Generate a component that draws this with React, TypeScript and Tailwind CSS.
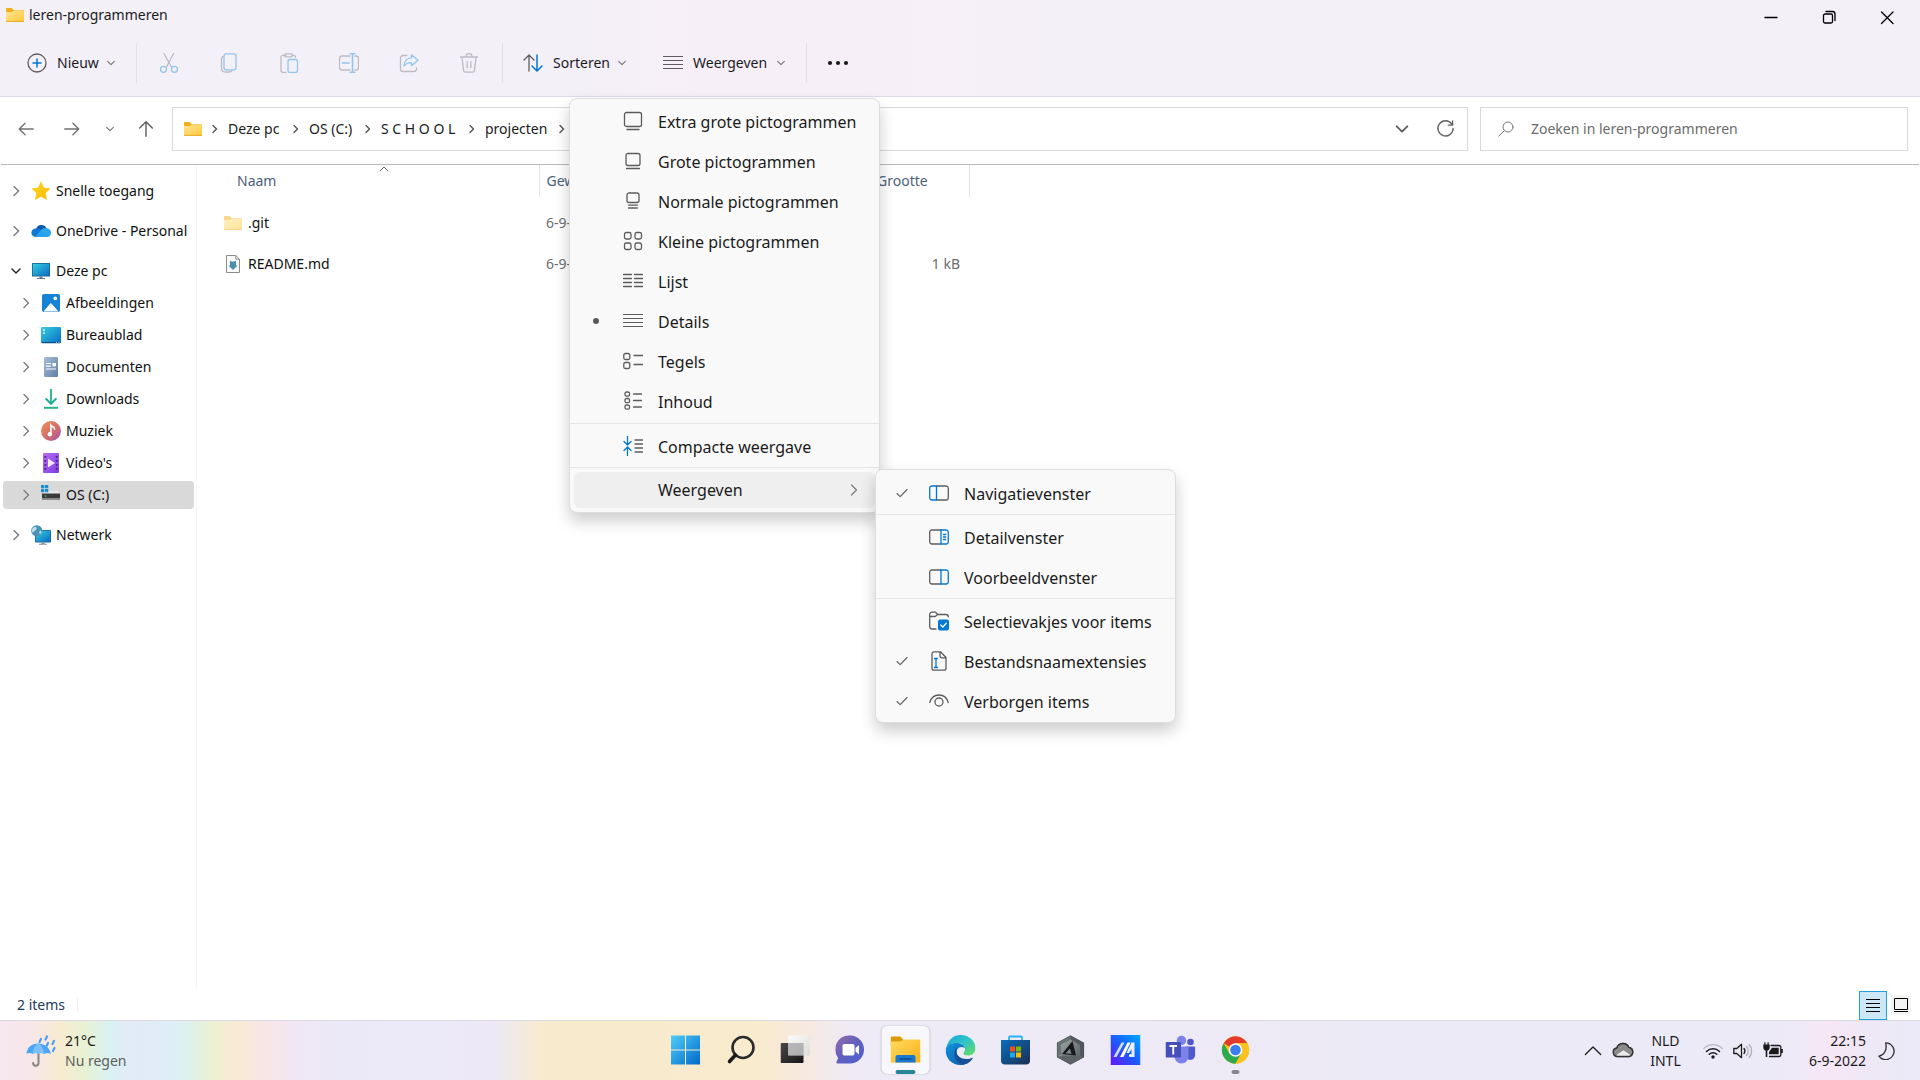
import React from "react";

type P = { children?: React.ReactNode };

const Svg = ({ s = 20, vb = "0 0 20 20", c = "", children }: P & { s?: number; vb?: string; c?: string }) => (
  <svg width={s} height={s} viewBox={vb} fill="none" stroke="#5c5c5c" strokeWidth="1.3" strokeLinecap="round" strokeLinejoin="round" className={"shrink-0 " + c} aria-hidden="true">
    {children}
  </svg>
);

const BLUE = "#0078d4";

/* ---------- chevrons ---------- */
const ChevRight = ({ c = "#808080", s = 12 }: { c?: string; s?: number }) => (
  <Svg s={s} vb="0 0 12 12"><path d="M4 1.5 8.5 6 4 10.5" stroke={c} strokeWidth="1.5" /></Svg>
);
const ChevDown = ({ c = "#777", s = 10 }: { c?: string; s?: number }) => (
  <Svg s={s} vb="0 0 12 12"><path d="M2 4 6 8 10 4" stroke={c} strokeWidth="1.4" /></Svg>
);
const Crumb = () => (
  <Svg s={10} vb="0 0 10 10"><path d="M3 1.5 6.500 5 3 8.500" stroke="#5a5a5a" strokeWidth="1.5" /></Svg>
);

/* ---------- folders and files ---------- */
const Folder = ({ pale = false }: { pale?: boolean }) => {
  const id = pale ? "fpale" : "fyel";
  return (
    <svg width="18" height="16" viewBox="0 0 18 16" className="shrink-0" aria-hidden="true">
      <defs>
        <linearGradient id={id} x1="0" y1="0" x2="1" y2="1">
          <stop offset="0" stopColor={pale ? "#fff0bf" : "#ffe596"} />
          <stop offset="1" stopColor={pale ? "#ffe49b" : "#ffc83a"} />
        </linearGradient>
      </defs>
      <path d="M0 2c0-.8.4-1 1-1h4.6L8 3.2h9c.6 0 1 .4 1 1V14H0z" fill={pale ? "#f8d98b" : "#f0af1c"} />
      <path d="M0 5h6l2-1.4h10V14a1 1 0 0 1-1 1H1a1 1 0 0 1-1-1z" fill={`url(#${id})`} />
      <path d="M0 14.4h18" stroke={pale ? "#f3d489" : "#e8a91e"} strokeWidth=".9" />
    </svg>
  );
};
const MdFile = () => (
  <svg width="18" height="20" viewBox="0 0 18 20" className="shrink-0" aria-hidden="true">
    <path d="M2.5 1.5h9.3l3.7 3.7v13.3h-13z" fill="#fafafa" stroke="#8b8b8b" />
    <path d="M11.8 1.5v3.7h3.7" fill="none" stroke="#8b8b8b" />
    <path d="M6 6.5 7.5 7.5h3L12 6.5v5h1.6L9 16l-4.6-4.5H6z" fill="#4a90ae" />
  </svg>
);

/* ---------- navigation icons ---------- */
const box = { width: 20, height: 20, viewBox: "0 0 20 20", className: "shrink-0", "aria-hidden": true } as const;
const Star = () => (
  <svg {...box}>
    <defs><linearGradient id="st" x1="0" y1="0" x2="1" y2="1"><stop stopColor="#ffdb1f" /><stop offset="1" stopColor="#fbb400" /></linearGradient></defs>
    <path d="m10 1 2.7 6 6.3.7-4.7 4.3 1.3 6.5L10 15.200 4.400 18.500 5.700 12 1 7.700 7.300 7z" fill="url(#st)" stroke="#fdbf0a" strokeWidth=".6" strokeLinejoin="round" />
  </svg>
);
const OneDrive = () => (
  <svg {...box}>
    <path d="M5 8a5.600 5.600 0 0 1 10.400-.9L11 12z" fill="#0a58b0" />
    <path d="M4.400 16A4.300 4.300 0 0 1 5 7.400c1.700-.3 3 .2 4.300 1.100L16 13l-5 3z" fill="#0f78d4" />
    <path d="M9 10.500c2-3.400 4.600-3.900 6.400-3.400 0 0 4.600.5 4.600 4.800 0 2.400-1.900 4.100-4 4.100H4.400z" fill="#2aa5ec" />
    <path d="m4.400 16 5-5.700 8.800 5z" fill="#28a0ea" />
  </svg>
);
const Pc = () => (
  <svg {...box}>
    <defs><linearGradient id="pc" x1="0" y1="0" x2="1" y2="1"><stop stopColor="#35cfe0" /><stop offset="1" stopColor="#0a6cc4" /></linearGradient></defs>
    <rect x="1" y="2" width="18" height="13.500" rx=".6" fill="#17608f" />
    <rect x="1.800" y="2.800" width="16.400" height="11.800" fill="url(#pc)" />
    <path d="M8.500 15.500h3v1.600h-3zM6 17h8v1H6z" fill="#6d7a84" />
  </svg>
);
const Pictures = () => (
  <svg {...box}>
    <rect x="1" y="1" width="18" height="18" rx="1.800" fill="#1683d4" />
    <path d="m2.500 18.600 6.300-7.700a1.300 1.300 0 0 1 2 0l6.700 7.700z" fill="#fff" />
    <circle cx="14.300" cy="5.400" r="1.800" fill="#fff" />
  </svg>
);
const Desktop = () => (
  <svg {...box}>
    <rect x="0" y="2" width="20" height="16" rx="1.200" fill="url(#pc)" />
    <path d="M2.200 4.200h1.600v1.600H2.200zM2.200 7.200h1.600v1.600H2.200z" fill="#fff" />
    <path d="M.4 17h19.200v.6a.8.8 0 0 1-.8.600H1.200a.8.800 0 0 1-.8-.6z" fill="#0b4f86" />
    <path d="M15 17.400h1M17.500 17.400h1" stroke="#fff" strokeWidth=".7" />
  </svg>
);
const Docs = () => (
  <svg {...box}>
    <defs><linearGradient id="dc" x1="0" y1="0" x2="1" y2="1"><stop stopColor="#a9bfd8" /><stop offset="1" stopColor="#5d7fa5" /></linearGradient></defs>
    <rect x="3" y="0" width="14" height="20" rx="1.200" fill="url(#dc)" />
    <path d="M5 6.500h5M5 9.200h5M5 12h10" stroke="#fff" strokeWidth="1.200" /><path d="M11.500 6h3.500v3.400h-3.500z" fill="#fff" />
  </svg>
);
const Downloads = () => (
  <svg {...box} fill="none" stroke="#1eb08c" strokeWidth="2">
    <path d="M10 0v14.500" stroke="#35bd8a" /><path d="m4.600 9.400 5.400 5.400 5.400-5.400" stroke="#1aab9b" /><path d="M3 18.800h14" stroke="#27b38e" />
  </svg>
);
const Music = () => (
  <svg {...box}>
    <defs><linearGradient id="mu" x1="0" y1="0" x2="1" y2="1"><stop stopColor="#f0914d" /><stop offset=".6" stopColor="#cf6a72" /><stop offset="1" stopColor="#9a58b8" /></linearGradient></defs>
    <circle cx="10" cy="10" r="10" fill="url(#mu)" />
    <circle cx="8.800" cy="13.300" r="2.200" fill="#fff" /><path d="M9.900 13V4.500c.8 1.200 3.600 1 3.600 3.200v1" stroke="#fff" strokeWidth="1.600" fill="none" />
  </svg>
);
const Videos = () => (
  <svg {...box}>
    <defs><linearGradient id="vi" x1="0" y1="0" x2="1" y2="1"><stop stopColor="#b76cf2" /><stop offset="1" stopColor="#7d3de0" /></linearGradient></defs>
    <rect x="2" y="0" width="16" height="20" rx="1" fill="url(#vi)" />
    <path d="M4.300 3v15M15.700 3v15" stroke="#4a2188" strokeWidth="1.800" strokeDasharray="1.800 2.200" />
    <path d="m7 5.500 7 4.500-7 4.500z" fill="#f1e9fb" />
  </svg>
);
const Drive = () => (
  <svg {...box}>
    <path d="M4 6h12.500L19 9H1z" fill="#e9e9e9" /><rect x="1" y="8.500" width="18" height="5" fill="#3b3b3b" /><path d="M1 13.500h18V15H1z" fill="#8b8b8b" />
    <circle cx="4.500" cy="11" r=".8" fill="#45e069" />
    <path d="M0 0h3.300v3.300H0zM4 0h3.300v3.300H4zM0 4h3.300v3.300H0zM4 4h3.300v3.300H4z" fill="#1a8fd8" />
  </svg>
);
const Network = () => (
  <svg {...box}>
    <rect x="4" y="5" width="16" height="12.500" rx=".8" fill="#1b6794" /><rect x="4.800" y="5.800" width="14.400" height="10.900" fill="url(#pc)" />
    <path d="M10.500 17.500h3v1.300h-3zM8 18.700h8v1H8z" fill="#84909a" />
    <circle cx="5.800" cy="5.800" r="5.600" fill="#4a93b8" /><path d="M1.500 3.500C4 1 6.500 2 5.500 4S2.500 6 2 8C.6 6.500.6 5 1.500 3.500zM8 7l2-1.500.6 2L9 9.500z" fill="#bfe0ec" />
  </svg>
);

/* ---------- toolbar ---------- */
const GR = "#bdbac2";
const LB = "#93c6ec";
const tools: [string, React.ReactNode][] = [
  ["Knippen", <><path d="M5 0.800 12.500 14M14.500.800 7.500 14" stroke={GR} /><circle cx="4.500" cy="16.300" r="3" stroke={LB} /><circle cx="15.500" cy="16.300" r="3" stroke={LB} /></>],
  ["Kopiëren", <><path d="M4 3.500c-1 .5-1.500 1-1.500 2.500v9c0 2.500 1.500 4 4 4h4c1.200 0 2-.5 2.500-1.300" stroke={GR} /><rect x="5" y=".8" width="12" height="16" rx="2.200" stroke={LB} /></>],
  ["Plakken", <><path d="M7 2.300H4A2 2 0 0 0 2 4.300v13a2 2 0 0 0 2 2h3M13 2.300h1.500a2 2 0 0 1 2 2" stroke={GR} /><rect x="5.500" y=".8" width="8" height="3" rx="1.500" stroke={GR} /><rect x="9" y="6.500" width="9.500" height="13" rx="2" stroke={LB} /></>],
  ["Naam wijzigen", <><path d="M11 3H3a2.500 2.500 0 0 0-2.500 2.500v9A2.500 2.500 0 0 0 3 17h8M16 3h1a2.500 2.500 0 0 1 2.500 2.500v9A2.500 2.500 0 0 1 17 17h-1" stroke={GR} /><path d="M13.500.800v18.400M11.200.800h4.600M11.200 19.200h4.600M3.500 10h6.500" stroke={LB} strokeWidth="1.600" /></>],
  ["Delen", <><path d="M8 2.500H4A2.500 2.500 0 0 0 1.500 5v11A2.500 2.500 0 0 0 4 18.500h11a2.500 2.500 0 0 0 2.500-2.500v-1" stroke={GR} /><path d="M12.500 1.800 19 7.200l-6.500 5.500V9.600C9 9.500 7 10.500 5 13c.3-4.500 3-8 7.500-8.200z" stroke={LB} /></>],
  ["Verwijderen", <><path d="M1.500 4h17M7 3.500a3 3 0 0 1 6 0M3 4.200l1.500 13a2 2 0 0 0 2 1.900h7a2 2 0 0 0 2-1.900l1.500-13M8.200 8.500v6M11.800 8.500v6" stroke={GR} /></>],
];
const VSep = ({ c = "" }: { c?: string }) => <div className={"h-10 w-px bg-[#e4e0e8] " + c} />;

const Lines = () => (
  <Svg><path d="M.5 3.500h19M.5 7.500h19M.5 11.500h19M.5 15.500h19" strokeWidth="1.200" /></Svg>
);

const Toolbar = () => (
  <div className="flex h-[66px] items-center text-sm text-[#1c1b1f]">
    <button className="ml-[27px] flex w-[89px] items-center">
      <Svg><circle cx="10" cy="10" r="9" /><path d="M10 6v8M6 10h8" stroke={BLUE} strokeWidth="1.500" /></Svg>
      <span className="ml-2.5 mr-auto">Nieuw</span>
      <ChevDown />
    </button>
    <VSep c="ml-5" />
    <div className="ml-0.5 flex items-center">
      {tools.map(([n, g]) => (
        <button key={n} aria-label={n} disabled className="flex w-[60px] justify-center">
          <Svg>{g}</Svg>
        </button>
      ))}
    </div>
    <VSep c="ml-[3px]" />
    <button className="ml-5 flex w-[104px] items-center">
      <Svg><path d="M6 18V2.200M1 7l5-5 5 5" /><path d="M14 2v15.800M9 13l5 5 5-5" stroke={BLUE} strokeWidth="1.500" /></Svg>
      <span className="ml-2.5 mr-auto">Sorteren</span>
      <ChevDown />
    </button>
    <button className="ml-9 flex w-[123px] items-center" aria-expanded="true">
      <Lines />
      <span className="ml-2.5 mr-auto">Weergeven</span>
      <ChevDown />
    </button>
    <VSep c="ml-5" />
    <button className="ml-5 flex" aria-label="Meer weergeven">
      <svg width="22" height="6" viewBox="0 0 22 6" aria-hidden="true"><g fill="#1b1b1b"><circle cx="3" cy="3" r="2.100" /><circle cx="11" cy="3" r="2.100" /><circle cx="19" cy="3" r="2.100" /></g></svg>
    </button>
  </div>
);

const Header = () => (
  <header className="border-b border-[#dfdbe4] bg-[linear-gradient(90deg,#f3f0f8_0%,#f3f0f8_28%,#f7eff7_38%,#f7eff7_45%,#f3f0f8_58%)]">
    <div className="flex h-[30px] items-start">
      <div className="flex items-center gap-[5px] pl-1.5 pt-[5px]">
        <Folder />
        <h1 className="text-sm leading-5 text-[#1b1b1b]">leren-programmeren</h1>
      </div>
      <div className="ml-auto mr-1 flex pt-2">
        <button aria-label="Minimaliseren" className="flex w-[58px] justify-center"><Svg s={18} vb="0 0 18 18"><path d="M3 9.500h12" stroke="#000" /></Svg></button>
        <button aria-label="Verkleinen" className="flex w-[58px] justify-center"><Svg s={18} vb="0 0 18 18"><rect x="3.500" y="6" width="9" height="9" rx="1.500" stroke="#000" /><path d="M6 3.500h6.500a2.500 2.500 0 0 1 2.500 2.500v6.500" stroke="#000" /></Svg></button>
        <button aria-label="Sluiten" className="flex w-[58px] justify-center"><Svg s={18} vb="0 0 18 18"><path d="m3.500 4 11.500 11.500M15 4 3.500 15.500" stroke="#000" /></Svg></button>
      </div>
    </div>
    <Toolbar />
  </header>
);

const AddressBar = () => (
  <div className="mx-px flex h-[68px] items-center border-b border-[#b9b9b9] pb-2 pt-1 text-sm text-[#1b1b1b]">
    <nav aria-label="Geschiedenis" className="flex w-[171px] items-center pl-4">
      <button aria-label="Terug"><Svg s={18}><path d="M18 10H2.500M9 3.500 2.500 10 9 16.500" stroke="#707070" strokeWidth="1.500" /></Svg></button>
      <button aria-label="Vooruit" className="ml-7"><Svg s={18}><path d="M2 10h15.500M11 3.500 17.500 10 11 16.500" stroke="#707070" strokeWidth="1.500" /></Svg></button>
      <button aria-label="Recent" className="ml-6"><ChevDown /></button>
      <button aria-label="Omhoog" className="ml-[22px]"><Svg s={18}><path d="M10 18V2M3 9l7-7 7 7" stroke="#606060" strokeWidth="1.600" /></Svg></button>
    </nav>
    <div className="flex h-11 flex-1 items-center border border-[#d9d9d9] bg-white pl-[11px] pr-3">
      <Folder />
      <ol className="ml-2 flex items-center">
        {[["Deze pc", "w-[81px]"], ["OS (C:)", "w-[72px]"], ["S C H O O L", "w-[104px]"], ["projecten", "w-[90px]"]].map(([t, w]) => (
          <li key={t} className={"flex items-center gap-2 whitespace-nowrap " + w}><Crumb /><button>{t}</button></li>
        ))}
        <li><Crumb /></li>
      </ol>
      <button aria-label="Vorige locaties" className="ml-auto"><ChevDown s={16} c="#606060" /></button>
      <button aria-label="Vernieuwen" className="ml-[26px]"><Svg s={19}><path d="M16.500 5.200A8 8 0 1 0 18 10M17.500 2v4.500H13" stroke="#606060" strokeWidth="1.400" /></Svg></button>
    </div>
    <label className="ml-3 mr-[11px] flex h-11 w-[428px] items-center border border-[#d9d9d9] bg-white pl-[17px]">
      <Svg s={16} vb="0 0 16 16"><circle cx="10" cy="6" r="5" stroke="#777" strokeWidth="1" /><path d="M6.300 9.700.8 15.200" stroke="#777" strokeWidth="1" /></Svg>
      <input type="search" aria-label="Zoeken in leren-programmeren" placeholder="Zoeken in leren-programmeren" className="ml-[17px] flex-1 bg-transparent outline-none placeholder:text-[#6b6b6b]" />
    </label>
  </div>
);

const Side = ({ i, t, sub, open, sel }: { i: React.ReactNode; t: string; sub?: boolean; open?: boolean; sel?: boolean }) => (
  <button className={"my-0.5 ml-[3px] mr-0.5 flex h-7 items-center whitespace-nowrap rounded-sm text-sm text-[#111] " + (sub ? "pl-[17px] " : "pl-[7px] ") + (sel ? "bg-[#d9d9d9]" : "")}>
    {open ? <ChevDown s={12} c="#222" /> : <ChevRight />}
    <span className="ml-[9px] mr-[5px]">{i}</span>
    {t}
  </button>
);

const Sidebar = () => (
  <aside className="mb-px flex w-[197px] shrink-0 flex-col gap-2 border-r border-[#f5f5f5] pt-[10px]">
    <Side i={<Star />} t="Snelle toegang" />
    <Side i={<OneDrive />} t="OneDrive - Personal" />
    <div className="flex flex-col">
      <Side i={<Pc />} t="Deze pc" open />
      <Side i={<Pictures />} t="Afbeeldingen" sub />
      <Side i={<Desktop />} t="Bureaublad" sub />
      <Side i={<Docs />} t="Documenten" sub />
      <Side i={<Downloads />} t="Downloads" sub />
      <Side i={<Music />} t="Muziek" sub />
      <Side i={<Videos />} t="Video's" sub />
      <Side i={<Drive />} t="OS (C:)" sub sel />
    </div>
    <Side i={<Network />} t="Netwerk" />
  </aside>
);

const Files = () => (
  <main className="flex-1">
    <table className="table-fixed text-left text-sm">
      <thead className="text-[#4c607a]">
        <tr className="h-8">
          <th className="relative w-[342px] border-r border-[#e5e5e5] pl-10 font-normal">
            Naam
            <svg className="absolute left-[182px] top-px" width="10" height="6" viewBox="0 0 10 6" fill="none" stroke="#666" aria-hidden="true"><path d="M.8 5.200 5 1l4.200 4.200" /></svg>
          </th>
          <th className="w-[165px] pl-[7px] font-normal">Gewijzigd op</th>
          <th className="w-[165px] pl-[7px] font-normal">Type</th>
          <th className="w-[100px] border-r border-[#e5e5e5] pl-2 font-normal">Grootte</th>
        </tr>
      </thead>
      <tbody className="text-[#6d6d6d]">
        <tr><td colSpan={4} className="h-[5px]" /></tr>
        <tr className="h-[41px]">
          <td className="pl-[27px]"><span className="flex items-center gap-1.5 text-[#111]"><Folder pale />.git</span></td>
          <td className="pl-[7px]">6-9-2022</td>
          <td className="pl-[7px]">Map</td>
          <td />
        </tr>
        <tr className="h-[41px]">
          <td className="pl-[27px]"><span className="flex items-center gap-1.5 text-[#111]"><MdFile />README.md</span></td>
          <td className="pl-[7px]">6-9-2022</td>
          <td className="pl-[7px]">MD-bestand</td>
          <td className="pr-[9px] text-right">1 kB</td>
        </tr>
      </tbody>
    </table>
  </main>
);

const StatusBar = () => (
  <footer className="flex h-[30px] items-center pl-[17px] pr-[9px] text-sm text-[#1e395b]">
    <span>2 items</span>
    <div className="ml-3 h-3.5 w-px bg-[#f0f0f0]" />
    <button aria-label="Details" className="ml-auto flex h-[29px] w-7 items-center justify-center border border-[#26a0da] bg-[#cce8f6]">
      <svg width="16" height="16" viewBox="0 0 16 16" stroke="#000" aria-hidden="true"><path d="M1 2.500h14M1 6.500h14M1 10.500h14M1 14.500h14" /></svg>
    </button>
    <button aria-label="Grote pictogrammen" className="ml-1 flex h-5 w-5 items-center justify-center bg-[#f4f4f4]">
      <svg width="16" height="16" viewBox="0 0 16 16" fill="none" stroke="#000" aria-hidden="true"><path d="M1.500 1.500h13v11h-13zM1 14.500h14" /></svg>
    </button>
  </footer>
);

/* ---------- menus ---------- */
const Check = () => <Svg s={12} vb="0 0 12 12"><path d="m1 6.500 3.200 3.200L11 2.500" strokeWidth="1.100" /></Svg>;
const Item = ({ i, t, mark }: { i?: React.ReactNode; t: string; mark?: React.ReactNode }) => (
  <button role="menuitem" className="flex h-10 w-full items-center whitespace-nowrap pl-5 pr-4 text-base">
    <span className="flex w-3 justify-center pb-0.5">{mark}</span>
    <span className="ml-[21px] mr-[15px] flex w-5 items-center justify-center pb-[3px]">{i}</span>
    {t}
  </button>
);
const HR = () => <div role="separator" className="mb-[3px] h-px bg-[#e6e6e6]" />;
const menuCls = "rounded-lg border border-[#dedede] bg-[#f9f9f9] text-[#1b1b1b] shadow-[0_8px_16px_rgba(0,0,0,0.2)]";

const SubMenu = () => (
  <div role="menu" className={"absolute -top-[3px] left-full w-[301px] pt-1 " + menuCls}>
    <Item mark={<Check />} t="Navigatievenster" i={<Svg><path d="M7.500 3H17a2.300 2.300 0 0 1 2.300 2v10a2 2 0 0 1-2.300 2H7.500" /><path d="M7.500 3H3a2.200 2.200 0 0 0-2.300 2v10A2.200 2.200 0 0 0 3 17h4.500z" stroke={BLUE} /></Svg>} />
    <HR />
    <Item t="Detailvenster" i={<Svg><path d="M12 3H3a2.200 2.200 0 0 0-2.300 2v10A2.200 2.200 0 0 0 3 17h9" /><path d="M12 3h5a2.200 2.200 0 0 1 2.300 2v10a2.200 2.200 0 0 1-2.300 2h-5zM14.500 7.500h2.200M14.500 10h2.200M14.500 12.500h2.200" stroke={BLUE} /></Svg>} />
    <Item t="Voorbeeldvenster" i={<Svg><path d="M12 3H3a2.200 2.200 0 0 0-2.300 2v10A2.200 2.200 0 0 0 3 17h9" /><path d="M12 3h5a2.200 2.200 0 0 1 2.300 2v10a2.200 2.200 0 0 1-2.300 2h-5z" stroke={BLUE} /></Svg>} />
    <HR />
    <Item t="Selectievakjes voor items" i={<Svg><path d="M7 18H3a2.300 2.300 0 0 1-2.300-2.300V3.500A2.300 2.300 0 0 1 3 1.200h3.500L9 3.500h8a2.300 2.300 0 0 1 2.300 2.300M.7 5.500h5.500l2.500-2" /><rect x="9" y="8.500" width="11" height="11" rx="2" fill={BLUE} stroke="none" /><path d="m11.800 14 2 2 3.500-3.800" stroke="#fff" /></Svg>} />
    <Item mark={<Check />} t="Bestandsnaamextensies" i={<Svg><path d="M11.500.800H5a2 2 0 0 0-2 2v14.400a2 2 0 0 0 2 2h10a2 2 0 0 0 2-2V6.500zM11 .8V5a1.800 1.800 0 0 0 1.800 1.800H17" /><path d="M7 7.500v9M5.500 7.500h3M5.500 16.500h3" stroke={BLUE} /></Svg>} />
    <Item mark={<Check />} t="Verborgen items" i={<Svg><path d="M.8 11.500C2 7 5.500 4 10 4s8 3 9.200 7.500" /><circle cx="10" cy="11" r="4" /></Svg>} />
  </div>
);

const Menu = () => (
  <div role="menu" className={"absolute left-[569px] top-[98px] w-[311px] pb-1 pt-[3px] " + menuCls}>
    <Item t="Extra grote pictogrammen" i={<Svg><rect x="1.500" y="1.500" width="17" height="14" rx="2" /><path d="M4 18.500h12" /></Svg>} />
    <Item t="Grote pictogrammen" i={<Svg><rect x="3" y="2.500" width="14" height="12" rx="2" /><path d="M3.500 17.500h13" /></Svg>} />
    <Item t="Normale pictogrammen" i={<Svg><rect x="4" y="2" width="12" height="9.500" rx="2" /><path d="M5.500 14.200h9M5.500 17h9" /></Svg>} />
    <Item t="Kleine pictogrammen" i={<Svg><rect x="1.500" y="1.500" width="6.500" height="6.500" rx="1.800" /><rect x="12" y="1.500" width="6.500" height="6.500" rx="1.800" /><rect x="1.500" y="12" width="6.500" height="6.500" rx="1.800" /><rect x="12" y="12" width="6.500" height="6.500" rx="1.800" /></Svg>} />
    <Item t="Lijst" i={<Svg><path d="M.5 3.500H8.500M.5 7.500H8.500M.5 11.500H8.500M.5 15.500H8.500M11.500 3.500h8M11.500 7.500h8M11.500 11.500h8M11.500 15.500h8" /></Svg>} />
    <Item t="Details" mark={<span className="h-1.5 w-1.5 rounded-full bg-[#5a5a5a]" />} i={<Lines />} />
    <Item t="Tegels" i={<Svg><rect x=".8" y="2.500" width="6" height="6" rx="1.500" /><rect x=".8" y="11.500" width="6" height="6" rx="1.500" /><path d="M11 4.500h8.500M11 13.500h8.500" /></Svg>} />
    <Item t="Inhoud" i={<Svg><rect x="2" y="1" width="4.500" height="4.200" rx="1.500" /><rect x="2" y="7.500" width="4.500" height="4.200" rx="1.500" /><rect x="2" y="14" width="4.500" height="4.200" rx="1.500" /><path d="M10.500 3h8M10.500 9.500h8M10.500 16h8" /></Svg>} />
    <div className="h-px" />
    <HR />
    <Item t="Compacte weergave" i={<Svg><path d="M4.500.500v8M1 5.500 4.500 9 8 5.500M4.500 19.500v-8M1 14.500 4.500 11 8 14.500" stroke={BLUE} /><path d="M12 4h7.500M12 8h7.500M12 12h7.500M12 16h7.500" /></Svg>} />
    <HR />
    <div className="relative mx-1 mt-1">
      <button role="menuitem" aria-expanded="true" className="flex h-9 w-full items-center rounded-md bg-[#efefef] pl-[84px] pr-3.5 text-base">
        Weergeven
        <span className="ml-auto"><Svg s={14} vb="0 0 14 14"><path d="M4.500 2 9.500 7l-5 5" stroke="#808080" /></Svg></span>
      </button>
      <SubMenu />
    </div>
  </div>
);

/* ---------- taskbar ---------- */
const T = ({ children }: P) => <svg width="30" height="30" viewBox="0 0 30 30" aria-hidden="true">{children}</svg>;

const G = ({ id, a, b, c }: { id: string; a: string; b: string; c?: string }) => (
  <linearGradient id={id} x1="0" y1="0" x2="1" y2="1"><stop stopColor={a} />{c && <stop offset=".5" stopColor={c} />}<stop offset="1" stopColor={b} /></linearGradient>
);

const apps: [string, React.ReactNode][] = [
  ["Start", <T><defs><linearGradient id="wn" gradientUnits="userSpaceOnUse" x1="0" y1="0" x2="30" y2="30"><stop stopColor="#4fd0fb" /><stop offset="1" stopColor="#0067c8" /></linearGradient></defs><path d="M.5.500h14v14H.5zM15.500.500h14v14h-14zM.5 15.500h14v14H.5zM15.500 15.500h14v14h-14z" fill="url(#wn)" /></T>],
  ["Zoeken", <T><circle cx="17.500" cy="12.500" r="10.500" fill="none" stroke="#2b2b2b" strokeWidth="2.600" /><path d="m10 20-6 6.500" stroke="#1a1a1a" strokeWidth="3.600" strokeLinecap="round" /></T>],
  ["Taakweergave", <T><defs><G id="tv" a="#4a4a4a" b="#151515" /><G id="tw" a="#ffffff" b="#d8d8d8" /></defs><rect x="0" y="8" width="23" height="20" rx="1" fill="url(#tv)" /><rect x="7.500" y=".5" width="22" height="20" rx="1" fill="url(#tw)" opacity=".85" /><path d="M7.500 8H23v12.500H7.500z" fill="#9c9c9c" opacity=".55" /></T>],
  ["Chat", <T><defs><G id="ch" a="#9a6aa8" b="#4d5fd8" c="#6060bd" /></defs><path d="M15 .5a14 14 0 1 1-1 28H2c-1.300 0-1.400-1-.8-2l1.400-3.500A14 14 0 0 1 15 .5z" fill="url(#ch)" /><rect x="7" y="9" width="12" height="11.500" rx="1.800" fill="#fff" /><path d="m20 13 3.500-3v9.500L20 16.500z" fill="#fff" /></T>],
  ["Verkenner", <T><defs><G id="ex" a="#ffd964" b="#fbb211" /></defs><path d="M0 3c0-1 .6-1.500 1.500-1.500H10L13 5v6H0z" fill="#dc9a08" /><path d="M0 6.500h10L13 4.500h17V27.500H0z" fill="url(#ex)" /><path d="M5 27.500V22a2 2 0 0 1 2-2h16a2 2 0 0 1 2 2v5.500z" fill="#1878cf" /><path d="M9 24h12" stroke="#0c4b93" strokeWidth="1.400" /></T>],
  ["Edge", <T><defs><G id="ed" a="#1aa5e0" b="#6be05a" c="#31c5c4" /><G id="ee" a="#1493dc" b="#0b57a8" /></defs><path d="M1 12C2.500 4.500 8.500 0 15 0c9 0 15 6.500 15 13 0 5-3.600 7.500-7.500 7.500-3 0-4.600-1-4.600-2 0-.8 1.600-1.500 1.600-4.200C19.500 11 16 8 11 8 6.500 8 2.500 10 1 12z" fill="url(#ed)" /><path d="M.2 14C1 10 5.500 8 10.500 8c4.500 0 8 2 8.800 5-5-3-9 1-8 5.500C12.500 24 19 27 25.500 24 22.500 28.500 18.500 30 15 30 6 30-.5 23 .2 14z" fill="url(#ee)" /><path d="M11 12.500C7.500 16 7.500 26 17 29.800 21.500 29.500 26 26.500 27.500 22.500 20 26 11.500 23 11 17z" fill="#174f98" /></T>],
  ["Microsoft Store", <T><defs><G id="ms" a="#0a6dbb" b="#1c2f55" /></defs><path d="M8.500 6V2.500a1 1 0 0 1 1-1h11a1 1 0 0 1 1 1V6" fill="none" stroke="#26b5f2" strokeWidth="1.800" /><path d="M.5 5h29v20.500a4 4 0 0 1-4 4h-21a4 4 0 0 1-4-4z" fill="url(#ms)" /><path d="M9.500 11.500h5v5h-5z" fill="#f25022" /><path d="M15.500 11.500h5v5h-5z" fill="#7fba00" /><path d="M9.500 17.500h5v5h-5z" fill="#1aa8ef" /><path d="M15.500 17.500h5v5h-5z" fill="#ffb900" /></T>],
  ["Armoury Crate", <T><defs><G id="ar" a="#aab2b6" b="#4a4f52" /></defs><path d="m15 1 13 7v14l-13 7-13-7V8z" fill="url(#ar)" stroke="#4a4e50" strokeWidth="1.200" /><path d="m2 8 13-7v3.500L5.500 9.800V19L2 22z" fill="#6a7276" /><path d="m15 1 13 7v14l-3.500-2V10L15 4.500z" fill="#51585b" /><path d="m17 6 3.500 14.500-14-1.500z" fill="#16191a" /><path d="m14.500 13.500 1.500 5.500-6-.8z" fill="#7d868a" /><path d="m2 22 6-1.500 12 .5 8 1-13 7z" fill="#5d6467" /></T>],
  ["MyASUS", <T><defs><linearGradient id="my" x1="0" y1="1" x2="1" y2="0"><stop stopColor="#6a12ff" /><stop offset=".5" stopColor="#1a5cff" /><stop offset="1" stopColor="#00aaff" /></linearGradient></defs><path d="M0 0h30v30H0z" fill="url(#my)" /><path d="M3 22 11 7.500h3L6 22z" fill="#cfe0ff" /><path d="M9.500 22 17 7.500h3L13 22z" fill="#fff" /><path d="M16 18 21 7.500h3V22h-3v-8l-2.500 4z" fill="#e9f1ff" /><circle cx="20" cy="20.500" r="1.500" fill="#fff" /></T>],
  ["Microsoft Teams", <T><circle cx="16" cy="5.500" r="4.700" fill="#7b83eb" /><circle cx="25" cy="7" r="3.300" fill="#5059c9" /><path d="M20 11.500h8.500c.8 0 1.200.5 1.200 1.200v6.500c0 3.500-2 5.500-4.700 5.500-3 0-5-2-5-5z" fill="#5059c9" /><path d="M9 11.500h14V21c0 4-2.800 7.500-7 7.500S9 25 9 21z" fill="#7b83eb" /><rect x="0" y="7" width="15.500" height="15.500" rx="1.300" fill="#464eb8" /><path d="M4 11h7.500M7.750 11v8.500" stroke="#fff" strokeWidth="1.900" /></T>],
  ["Google Chrome", <T><circle cx="15" cy="15" r="13.700" fill="#fcc31e" /><path d="M15 15 3.140 8.150A13.700 13.700 0 0 1 26.860 8.150H15z" fill="#e33b2e" /><path d="M3.140 8.150A13.700 13.700 0 0 0 15 28.700l5.900-10.300L15 15 9 18.400z" fill="#2da94f" /><path d="M26.860 8.150A13.700 13.700 0 0 1 15 28.700l5.900-10.300L15 8.150z" fill="#fcc31e" /><circle cx="15" cy="15" r="6.800" fill="#fff" /><circle cx="15" cy="15" r="5.300" fill="#3b7ded" /></T>],
];

const Taskbar = () => (
  <footer className="relative flex h-[60px] items-center justify-between border-t border-[#dcd8e4] bg-[linear-gradient(90deg,#f6e6f1_0px,#f7e7e6_35px,#f7ebd0_60px,#e8f1d4_85px,#daf2f0_108px,#e2ebf8_130px,#e0ecf7_165px,#daf2ee_188px,#ecf0d2_212px,#f8ead2_235px,#f8e6e4_262px,#efe7f6_300px,#ebe9f7_340px,#ece8f8_490px,#f8ebcc_545px,#f8ebce_760px,#f7e9dd_800px,#eeeaf6_850px,#eceaf7_1780px,#f6e6f6_1830px,#ede8f6_1880px,#ebeaf8_1920px)]">
    <button className="flex items-center pl-[25px] text-left text-sm leading-5">
      <svg width="32" height="32" viewBox="0 0 32 32" aria-hidden="true">
        <path d="M13.500 19v9a2.700 2.700 0 0 1-5.400 0" fill="none" stroke="#858585" strokeWidth="2" strokeLinecap="round" />
        <path d="M1.500 19C2 12 7 8.500 13 8.500S24.500 12 26 19c-2-1.500-5-1.500-6.500 0-2-1.500-4.500-1.500-6 0-2-1.500-4.500-1.500-6 0-1.500-1.500-4.500-1.500-6 0z" fill="#4ba4f4" />
        <path d="M7.500 19c1-6 3-9.500 5.500-10.500 3 1 5.500 5 6.500 10.500-2-1.500-4.500-1.500-6 0-2-1.500-4.500-1.500-6 0z" fill="#7cc0fb" />
        <path d="m16 4-1.500 3M22 1.500 20.500 4.500M23 8l-1.500 3M29 6l-1.500 3M29.500 13 28 16" stroke="#4c9df0" strokeWidth="2.200" strokeLinecap="round" />
      </svg>
      <span className="ml-2"><span className="block text-[#1b1b1b]">21°C</span><span className="block text-[#5d5d5d]">Nu regen</span></span>
    </button>
    <nav aria-label="Taakbalk" className="absolute left-1/2 top-0 flex h-[58px] -translate-x-1/2 items-center">
      {apps.map(([n, g]) => (
        <div key={n} className="flex w-[55px] justify-center">
          <button aria-label={n} className={"relative flex h-12 w-12 items-center justify-center rounded-md " + (n === "Verkenner" ? "bg-[#f8f7fc] shadow-[0_0_2px_rgba(0,0,0,0.2)]" : "")}>
            {g}
            {n === "Verkenner" && <span className="absolute bottom-0 h-1 w-5 rounded-full bg-[#28859a]" />}
            {n === "Google Chrome" && <span className="absolute bottom-0 h-1 w-2 rounded-full bg-[#87868d]" />}
          </button>
        </div>
      ))}
    </nav>
    <div className="flex items-center pr-6 text-sm leading-5 text-[#1b1b1b]">
      <button aria-label="Verborgen pictogrammen"><Svg s={18}><path d="m1.500 14 8.500-8.500 8.500 8.500" stroke="#222" strokeWidth="1.500" /></Svg></button>
      <button aria-label="OneDrive" className="ml-2.5"><Svg s={22} vb="0 0 22 22"><path d="M5.500 16.500a4.300 4.300 0 0 1-.8-8.500A6.500 6.500 0 0 1 16.800 7.300a4.700 4.700 0 0 1 .4 9.200z" fill="#8b8b8b" /><path d="M5 15.500 11.500 11l6.500 4.500z" fill="#ececec" stroke="#ececec" /><path d="M5.500 16.500a4.300 4.300 0 0 1-.8-8.500A6.500 6.500 0 0 1 16.800 7.300a4.700 4.700 0 0 1 .4 9.200z" stroke="#333" /></Svg></button>
      <button className="ml-4 w-[31px] text-center">NLD INTL</button>
      <button aria-label="Netwerk, geluid en batterij" className="ml-[22px] flex gap-2.5">
        <Svg s={20}><path d="M.8 7.500a13 13 0 0 1 18.400 0" stroke="#b9b6c0" /><path d="M3.500 10.500a9.200 9.200 0 0 1 13 0M6.200 13.300a5.400 5.400 0 0 1 7.600 0" stroke="#1b1b1b" strokeWidth="1.500" /><circle cx="10" cy="16" r="1.700" fill="#1b1b1b" stroke="none" /></Svg>
        <Svg s={20}><path d="M.8 7.500h3L8.500 3.300v13.400L3.800 12.500h-3z" stroke="#1b1b1b" /><path d="M11 7.500a4 4 0 0 1 0 5" stroke="#1b1b1b" /><path d="M13.500 5.500a7 7 0 0 1 0 9M16.200 3.500a10 10 0 0 1 0 13" stroke="#b0adb8" /></Svg>
        <Svg s={20}><path d="M8 4.500h8a1.800 1.800 0 0 1 1.800 1.800v7.400a1.800 1.800 0 0 1-1.800 1.800H6.500" stroke="#1b1b1b" /><path d="M18 8h1.800v4H18zM9 6.700h6.700v6.600H6V11z" fill="#1b1b1b" stroke="none" /><path d="M.3 3.500h6.400v3.500a3 3 0 0 1-2.400 2.700V16H2.700V9.700A3 3 0 0 1 .3 7zM1.300 1.200h1.200v3H1.300zM4.500 1.200h1.200v3H4.500z" fill="#1b1b1b" stroke="none" /></Svg>
      </button>
      <button className="w-[83px] text-right"><span className="block">22:15</span><span className="block">6-9-2022</span></button>
      <button aria-label="Focus" className="ml-3"><Svg s={18}><path d="M8.500 1A9.300 9.300 0 1 1 1 15.800C6.500 15 10.500 9 8.500 1z" stroke="#333" strokeWidth="1.500" /></Svg></button>
    </div>
  </footer>
);

export default function App() {
  return (
    <div className="relative flex min-h-screen flex-col overflow-hidden bg-white font-['Noto_Sans','Open_Sans',sans-serif]">
      <Header />
      <AddressBar />
      <div className="flex flex-1"><Sidebar /><Files /></div>
      <StatusBar />
      <Taskbar />
      <Menu />
    </div>
  );
}
